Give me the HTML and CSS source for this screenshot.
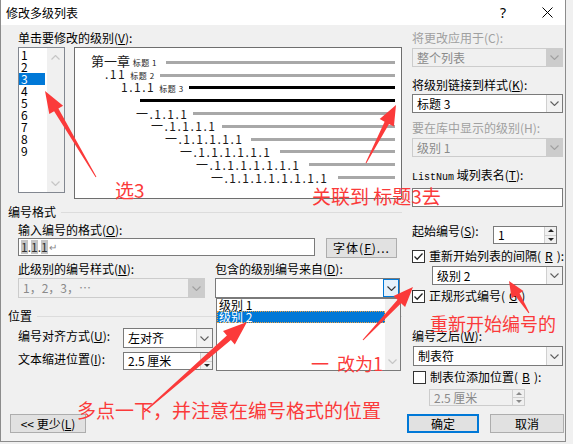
FILE: index.html
```html
<!DOCTYPE html>
<html lang="zh-CN">
<head>
    <meta charset="UTF-8">
    <meta name="viewport" content="width=device-width, initial-scale=1.0">
    <link rel="stylesheet" href="styles.css">
    <title>修改多级列表</title>
</head>
<body>

    <div class="dialog">
        <div class="titlebar">
            <span class="title">修改多级列表</span>
            <span class="help">?</span>
            <svg class="close" width="11" height="11" viewBox="0 0 11 11"><path d="M0.5 0.5L10.5 10.5M10.5 0.5L0.5 10.5" stroke="#000" stroke-width="1"/></svg>
        </div>

        <div class="content">
            <!-- left side -->
            <div class="col-left">
                <div class="lbl top">单击要修改的级别(<u>V</u>):</div>
                <div class="level-row">
                    <div class="level-list">
                        <div class="levels">
                            <div>1</div>
                            <div>2</div>
                            <div class="sel">3</div>
                            <div>4</div>
                            <div>5</div>
                            <div>6</div>
                            <div>7</div>
                            <div>8</div>
                            <div>9</div>
                        </div>
                        <div class="vscroll">
                            <svg width="9" height="5" viewBox="0 0 9 5"><polyline points="0.5,4.5 4.5,0.5 8.5,4.5" fill="none" stroke="#c6c6c6" stroke-width="1.2"/></svg>
                            <svg width="9" height="5" viewBox="0 0 9 5"><polyline points="0.5,0.5 4.5,4.5 8.5,0.5" fill="none" stroke="#c6c6c6" stroke-width="1.2"/></svg>
                        </div>
                    </div>
                    <div class="preview">
                        <div class="prow r1"><span class="ptext"><span class="big">第一章</span> <span class="tiny">标题 1</span></span><span class="bar"></span></div>
                        <div class="prow r2"><span class="ptext">.11 <span class="tiny">标题 2</span></span><span class="bar"></span></div>
                        <div class="prow r3"><span class="ptext">1.1.1 <span class="tiny">标题 3</span></span><span class="bar dark"></span></div>
                        <div class="prow r4"><span class="ptext"></span><span class="bar dark"></span></div>
                        <div class="prow r5"><span class="ptext">一.1.1.1</span><span class="bar"></span></div>
                        <div class="prow r6"><span class="ptext">一.1.1.1.1</span><span class="bar"></span></div>
                        <div class="prow r7"><span class="ptext">一.1.1.1.1.1</span><span class="bar"></span></div>
                        <div class="prow r8"><span class="ptext">一.1.1.1.1.1.1</span><span class="bar"></span></div>
                        <div class="prow r9"><span class="ptext">一.1.1.1.1.1.1.1</span><span class="bar"></span></div>
                        <div class="prow r10"><span class="ptext">一.1.1.1.1.1.1.1.1</span><span class="bar"></span></div>
                    </div>
                </div>

                <div class="group">编号格式</div>
                <div class="lbl fmt">输入编号的格式(<u>O</u>):</div>
                <div class="fmt-row">
                    <div class="fmt-input"><span class="fld">1</span>.<span class="fld">1</span>.<span class="fld">1</span><span class="ret">↵</span></div>
                    <div class="push font-btn">字体(<u>F</u>)...</div>
                </div>
                <div class="style-labels">
                    <span class="first">此级别的编号样式(<u>N</u>):</span>
                    <span>包含的级别编号来自(<u>D</u>):</span>
                </div>
                <div class="style-combos">
                    <div class="combo disabled w187">
                        <span class="val">1，2，3，…</span>
                        <span class="drop"><svg width="9" height="5" viewBox="0 0 9 5"><polyline points="0.5,0.5 4.5,4.5 8.5,0.5" fill="none" stroke="#a0a0a0" stroke-width="1.1"/></svg></span>
                    </div>
                    <div class="combo w185">
                        <span class="val"></span>
                        <span class="drop hot"><svg width="9" height="5" viewBox="0 0 9 5"><polyline points="0.5,0.5 4.5,4.5 8.5,0.5" fill="none" stroke="#333" stroke-width="1.1"/></svg></span>
                    </div>
                </div>

                <div class="group pos">位置</div>
                <div class="pos-row">
                    <span class="pos-lbl">编号对齐方式(<u>U</u>):</span>
                    <div class="combo w90">
                        <span class="val">左对齐</span>
                        <span class="drop"><svg width="9" height="5" viewBox="0 0 9 5"><polyline points="0.5,0.5 4.5,4.5 8.5,0.5" fill="none" stroke="#606060" stroke-width="1.1"/></svg></span>
                    </div>
                </div>
                <div class="pos-row second">
                    <span class="pos-lbl">文本缩进位置(<u>I</u>):</span>
                    <div class="spin w90">
                        <span class="val">2.5 厘米</span>
                        <span class="arrows"><i class="up"></i><i class="down"></i></span>
                    </div>
                </div>
            </div>

            <!-- right side -->
            <div class="col-right">
                <div class="lbl top dis">将更改应用于(C):</div>
                <div class="combo disabled rc">
                    <span class="val">整个列表</span>
                    <span class="drop"><svg width="9" height="5" viewBox="0 0 9 5"><polyline points="0.5,0.5 4.5,4.5 8.5,0.5" fill="none" stroke="#a0a0a0" stroke-width="1.1"/></svg></span>
                </div>
                <div class="lbl r-gap">将级别链接到样式(<u>K</u>):</div>
                <div class="combo rc">
                    <span class="val">标题 3</span>
                    <span class="drop"><svg width="9" height="5" viewBox="0 0 9 5"><polyline points="0.5,0.5 4.5,4.5 8.5,0.5" fill="none" stroke="#606060" stroke-width="1.1"/></svg></span>
                </div>
                <div class="lbl r-gap2 dis">要在库中显示的级别(H):</div>
                <div class="combo disabled rc">
                    <span class="val">级别 1</span>
                    <span class="drop"><svg width="9" height="5" viewBox="0 0 9 5"><polyline points="0.5,0.5 4.5,4.5 8.5,0.5" fill="none" stroke="#a0a0a0" stroke-width="1.1"/></svg></span>
                </div>
                <div class="lbl r-gap"><span class="mono">ListNum</span> 域列表名(<u>T</u>):</div>
                <div class="text-box rc"></div>

                <div class="start-row">
                    <span>起始编号(<u>S</u>):</span>
                    <div class="spin w64">
                        <span class="val">1</span>
                        <span class="arrows"><i class="up"></i><i class="down"></i></span>
                    </div>
                </div>
                <div class="chk-row c1"><span class="check"><svg width="11" height="11" viewBox="0 0 11 11"><polyline points="1.5,5.5 4.2,8.2 9.5,2.5" fill="none" stroke="#222" stroke-width="1.3"/></svg></span>重新开始列表的间隔(<u>R</u>):</div>
                <div class="combo lvl2">
                    <span class="val">级别 2</span>
                    <span class="drop"><svg width="9" height="5" viewBox="0 0 9 5"><polyline points="0.5,0.5 4.5,4.5 8.5,0.5" fill="none" stroke="#606060" stroke-width="1.1"/></svg></span>
                </div>
                <div class="chk-row c2"><span class="check"><svg width="11" height="11" viewBox="0 0 11 11"><polyline points="1.5,5.5 4.2,8.2 9.5,2.5" fill="none" stroke="#222" stroke-width="1.3"/></svg></span>正规形式编号(<u>G</u>)</div>
                <div class="lbl after">编号之后(<u>W</u>):</div>
                <div class="combo tabc">
                    <span class="val">制表符</span>
                    <span class="drop"><svg width="9" height="5" viewBox="0 0 9 5"><polyline points="0.5,0.5 4.5,4.5 8.5,0.5" fill="none" stroke="#606060" stroke-width="1.1"/></svg></span>
                </div>
                <div class="chk-row c3"><span class="check"></span>制表位添加位置(<u>B</u>):</div>
                <div class="spin disabled tabspin">
                    <span class="val">2.5 厘米</span>
                    <span class="arrows"><i class="up"></i><i class="down"></i></span>
                </div>
            </div>
        </div>

        <div class="footer">
            <div class="push less">&lt;&lt; 更少(<u>L</u>)</div>
            <div class="push ok">确定</div>
            <div class="push cancel">取消</div>
        </div>

        <!-- open dropdown of 包含的级别编号来自 -->
        <div class="droplist">
            <div class="items">
                <div class="item">级别 1</div>
                <div class="item sel">级别 2</div>
            </div>
            <div class="dscroll">
                <svg width="9" height="5" viewBox="0 0 9 5"><polyline points="0.5,0.5 4.5,4.5 8.5,0.5" fill="none" stroke="#c6c6c6" stroke-width="1.2"/></svg>
            </div>
        </div>

        <!-- red notes drawn on top of the screenshot -->
        <div class="annot">
            <svg width="566" height="442" viewBox="0 0 566 442">
                <g fill="#fb3a3a">
                    <polygon points="95.4,176.7 57.4,108.6 62.1,105.8 44,91 48.3,114 53.1,111.2 94.6,177.3"/>
                    <polygon points="365.4,163.2 388,123.9 392.9,126.5 395,105 378.7,119.1 383.6,121.7 364.6,162.8"/>
                    <polygon points="362.4,340.3 400.1,303.2 404.1,307 412,287 392.5,296 396.5,299.8 361.6,339.7"/>
                    <polygon points="528.4,312.7 518.6,293.3 522.4,290.9 508,281 510.6,298.3 514.4,295.9 527.6,313.3"/>
                    <polygon points="143.3,412.4 229.9,340.1 233.8,344.6 246,322 222,331 225.9,335.5 142.7,411.6"/>
                </g>
            </svg>
            <span class="note n1">选3</span>
            <span class="note n2">关联到 标题3去</span>
            <span class="note n3">重新开始编号的</span>
            <span class="note n4">一  改为1</span>
            <span class="note n5">多点一下，并注意在编号格式的位置</span>
        </div>
    </div>

</body>
</html>
```

FILE: styles.css
```css
* {
    box-sizing: border-box;
}

html {
    background: #f0f0f0;
}

body {
    margin: 0;
    font-family: "Noto Sans CJK SC", "Noto Sans", sans-serif;
    font-size: 12px;
    line-height: 14px;
    color: #000;
}

u {
    text-underline-offset: 1px;
}

.dialog {
    position: relative;
    width: 566px;
    height: 442px;
    background: #f0f0f0;
    border: 1px solid #8c8c8c;
    border-top: none;
}

/* title bar */
.titlebar {
    height: 25px;
    background: #fff;
    display: flex;
    align-items: center;
}

.title {
    padding-left: 5px;
}

.help {
    margin-left: auto;
    margin-right: 36px;
    font-family: "Noto Sans", sans-serif;
    font-size: 14px;
}

.close {
    margin-right: 12px;
}

/* two columns */
.content {
    display: flex;
    height: 389px;
    padding-left: 7px;
    gap: 10px;
}

.col-left {
    width: 394px;
}

.col-right {
    width: 151px;
}

.lbl.top {
    margin-top: 6px;
}

.col-left .lbl {
    margin-left: 10px;
}

.dis {
    color: #a0a0a0;
}

/* level list + preview */
.level-row {
    display: flex;
    align-items: flex-start;
    margin: 2px 0 0 10px;
    gap: 9px;
}

.level-list {
    width: 47px;
    height: 146px;
    border: 1px solid #828790;
    background: #fff;
    display: flex;
}

.levels {
    width: 28px;
    padding-top: 1px;
}

.levels div {
    width: 26px;
    height: 12px;
    line-height: 12px;
    padding-left: 2px;
}

.levels .sel {
    background: #0078d7;
    color: #fff;
}

.vscroll {
    width: 17px;
    background: #f0f0f0;
    display: flex;
    flex-direction: column;
    justify-content: space-between;
    align-items: center;
    padding: 7px 0 6px;
}

.preview {
    width: 328px;
    height: 152px;
    border: 1px solid #6e6e6e;
    background: #fff;
    padding: 8px 6px 0 0;
}

.prow {
    display: flex;
    align-items: center;
    height: 12.8px;
    font-size: 12px;
    line-height: 12px;
    letter-spacing: 1.5px;
    color: #1a1a1a;
}

.ptext {
    white-space: nowrap;
    flex-shrink: 0;
}

.big {
    font-size: 13px;
    letter-spacing: 0;
}

.tiny {
    font-size: 8px;
    letter-spacing: 0.5px;
}

.bar {
    flex: 1;
    height: 3px;
    background: #a8a8a8;
}

.bar.dark {
    background: #000;
}

.r1 { padding-left: 16px; }
.r1 .ptext { width: 75px; letter-spacing: 0; }
.r2 { padding-left: 30px; }
.r2 .ptext { width: 55px; }
.r3 { padding-left: 46px; }
.r3 .ptext { width: 68px; }
.r4 { padding-left: 65px; }
.r4 .ptext { width: 0; }
.r5 { padding-left: 61px; }
.r5 .ptext { width: 57px; }
.r6 { padding-left: 76px; }
.r6 .ptext { width: 71px; }
.r7 { padding-left: 90px; }
.r7 .ptext { width: 86px; }
.r8 { padding-left: 105px; }
.r8 .ptext { width: 100px; }
.r9 { padding-left: 121px; }
.r9 .ptext { width: 113px; }
.r10 { padding-left: 136px; }
.r10 .ptext { width: 127px; }

/* group headers */
.group {
    display: flex;
    align-items: center;
    margin-top: 6px;
}

.group::after {
    content: "";
    flex: 1;
    height: 1px;
    margin-left: 5px;
    background: #dcdcdc;
}

.group.pos {
    margin-top: 11px;
}

.lbl.fmt {
    margin-top: 4px;
}

.fmt-row {
    display: flex;
    align-items: flex-start;
    margin: 1px 0 0 10px;
}

.fmt-input {
    width: 297px;
    height: 18px;
    border: 1px solid #7a7a7a;
    background: #fff;
    padding-left: 2px;
    display: flex;
    align-items: center;
    color: #333;
}

.fld {
    background: #c4c4c4;
}

.ret {
    font-size: 10px;
    color: #888;
    margin-left: 1px;
}

/* buttons */
.push {
    height: 19px;
    background: #e1e1e1;
    border: 1px solid #adadad;
    display: flex;
    align-items: center;
    justify-content: center;
}

.font-btn {
    margin-left: 11px;
    width: 71px;
    height: 20px;
    letter-spacing: 1px;
}

.style-labels {
    display: flex;
    margin: 4px 0 0 10px;
}

.style-labels .first {
    width: 197px;
}

.style-combos {
    display: flex;
    margin: 2px 0 0 10px;
    gap: 10px;
}

/* combo boxes */
.combo {
    display: flex;
    height: 19px;
    border: 1px solid #7a7a7a;
    background: #fff;
}

.combo .val {
    flex: 1;
    padding-left: 4px;
    display: flex;
    align-items: center;
    white-space: nowrap;
}

.combo .drop {
    width: 16px;
    display: flex;
    align-items: center;
    justify-content: center;
    background: #f2f2f2;
    border-left: 1px solid #d0d0d0;
}

.combo .drop.hot {
    background: #e5f1fb;
    border: 1px solid #0078d7;
}

.combo.disabled {
    border-color: #cccccc;
    background: #f0f0f0;
    color: #8a8a8a;
}

.combo.disabled .drop {
    background: #cccccc;
    border-left: none;
}

.w187 { width: 187px; height: 20px; }
.w185 { width: 185px; height: 20px; }
.w90 { width: 90px; }

/* spin boxes */
.spin {
    display: flex;
    height: 18px;
    border: 1px solid #7a7a7a;
    background: #fff;
}

.spin .val {
    flex: 1;
    padding-left: 4px;
    display: flex;
    align-items: center;
    white-space: nowrap;
}

.spin .arrows {
    width: 12px;
    display: flex;
    flex-direction: column;
    border-left: 1px solid #d0d0d0;
}

.spin .arrows i {
    flex: 1;
    display: flex;
    align-items: center;
    justify-content: center;
    background: #f0f0f0;
}

.spin .arrows i + i {
    border-top: 1px solid #d0d0d0;
}

.spin .arrows i::before {
    content: "";
    border-left: 3px solid transparent;
    border-right: 3px solid transparent;
}

.spin .up::before {
    border-bottom: 3px solid #222;
}

.spin .down::before {
    border-top: 3px solid #222;
}

.spin.disabled {
    border-color: #cccccc;
    background: #f0f0f0;
    color: #8a8a8a;
}

.spin.disabled .up::before {
    border-bottom-color: #8a8a8a;
}

.spin.disabled .down::before {
    border-top-color: #8a8a8a;
}

.w64 { width: 64px; }

.pos-row {
    display: flex;
    align-items: flex-start;
    margin: 5px 0 0 10px;
}

.pos-row .pos-lbl {
    width: 105px;
    margin-top: 1px;
}

.pos-row .combo {
    height: 20px;
}

.pos-row.second {
    margin-top: 4px;
}

.pos-row.second .pos-lbl {
    margin-top: 0;
}

/* right column */
.rc {
    margin-top: 3px;
}

.lbl.r-gap {
    margin-top: 11px;
}

.lbl.r-gap2 {
    margin-top: 8px;
}

.col-right .combo.rc:nth-of-type(4) {
    margin-top: 2px;
}

.mono {
    font-family: "Liberation Mono", monospace;
    font-size: 10px;
}

.text-box {
    height: 19px;
    border: 1px solid #7a7a7a;
    background: #fff;
}

.start-row {
    display: flex;
    align-items: flex-start;
    margin-top: 17px;
}

.start-row .spin {
    margin: 2px 6px 0 auto;
}

.chk-row {
    display: flex;
    align-items: center;
    height: 14px;
    gap: 4px;
    white-space: nowrap;
}

.check {
    width: 13px;
    height: 13px;
    border: 1px solid #333;
    background: #fff;
    display: flex;
    align-items: center;
    justify-content: center;
}

.chk-row.c1 {
    margin-top: 5px;
}

.combo.lvl2 {
    margin: 3px 0 0 20px;
    width: 131px;
}

.chk-row.c2 {
    margin-top: 4px;
}

.lbl.after {
    margin-top: 26px;
}

.combo.tabc {
    margin: 3px 0 0 1px;
    height: 20px;
}

.chk-row.c3 {
    margin: 4px 0 0 1px;
}

.spin.tabspin {
    margin: 5px 0 0 17px;
    width: 96px;
    height: 17px;
}

/* bottom buttons */
.footer {
    display: flex;
    padding: 0 1px 0 9px;
}

.less {
    width: 76px;
}

.ok {
    margin-left: auto;
    width: 72px;
    border: 2px solid #0078d7;
}

.cancel {
    margin-left: 11px;
    width: 74px;
}

/* open dropdown list */
.droplist {
    position: absolute;
    left: 215px;
    top: 298px;
    width: 185px;
    height: 73px;
    border: 1px solid #7a7a7a;
    background: #fff;
    display: flex;
}

.droplist .items {
    flex: 1;
}

.droplist .item {
    height: 12px;
    line-height: 12px;
    padding-left: 2px;
}

.droplist .item.sel {
    background: #0078d7;
    color: #fff;
    outline: 1px dotted #f0a040;
    outline-offset: -1px;
}

.dscroll {
    width: 15px;
    background: #f0f0f0;
    display: flex;
    align-items: flex-end;
    justify-content: center;
    padding-bottom: 6px;
}

/* annotations */
.annot {
    position: absolute;
    left: 0;
    top: 0;
    width: 566px;
    height: 442px;
    pointer-events: none;
}

.annot svg {
    position: absolute;
    left: 0;
    top: 0;
}

.note {
    position: absolute;
    color: #fb3a3a;
    font-size: 19px;
    line-height: 19px;
    white-space: pre;
}

.n1 { left: 114px; top: 180px; }
.n2 { left: 311px; top: 186px; }
.n3 { left: 429px; top: 314px; font-size: 18px; }
.n4 { left: 310px; top: 354px; font-size: 18px; }
.n5 { left: 76px; top: 400px; }
```
